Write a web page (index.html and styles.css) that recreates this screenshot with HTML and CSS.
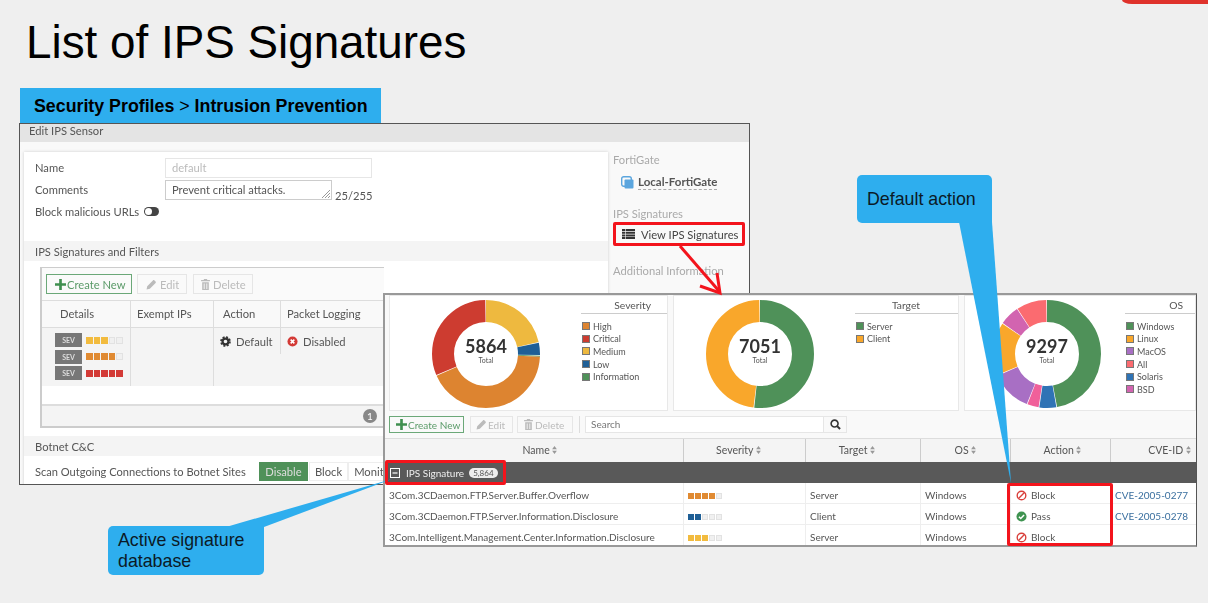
FILE: index.html
```html
<!DOCTYPE html>
<html lang="en">
<head>
  <meta charset="UTF-8">
  <title>List of IPS Signatures</title>
  <link rel="stylesheet" href="styles.css">
</head>
<body>

<!-- shared icons -->
<svg class="defs" width="0" height="0">
  <defs>
    <symbol id="i-plus" viewBox="0 0 10 10"><path d="M3.8 0h2.4v3.8H10v2.4H6.2V10H3.8V6.2H0V3.8h3.8z" fill="#3f8f4f"/></symbol>
    <symbol id="i-pencil" viewBox="0 0 10 10"><path d="M0.5 9.5l0.6-3 5.2-5.2c.4-.4 1-.4 1.4 0l1 1c.4.4.4 1 0 1.4L3.5 8.9z" fill="#bbb"/></symbol>
    <symbol id="i-trash" viewBox="0 0 10 10"><path d="M3.5 1V0h3v1H9v1H1V1zM2 3h6v7H2zM3.4 4v5h.8V4zm2.4 0v5h.8V4z" fill="#bbb" fill-rule="evenodd"/></symbol>
    <symbol id="i-search" viewBox="0 0 12 12"><circle cx="5" cy="5" r="3.8" fill="none" stroke="#333" stroke-width="1.7"/><path d="M7.8 7.8L11 11" stroke="#333" stroke-width="2.2"/></symbol>
    <symbol id="i-ban" viewBox="0 0 12 12"><circle cx="6" cy="6" r="4.7" fill="none" stroke="#d9413c" stroke-width="1.5"/><path d="M2.8 9.2l6.4-6.4" stroke="#d9413c" stroke-width="1.5"/></symbol>
    <symbol id="i-pass" viewBox="0 0 12 12"><circle cx="6" cy="6" r="5.5" fill="#3f9350"/><path d="M3.2 6.2l2 2 3.6-3.8" fill="none" stroke="#fff" stroke-width="1.6"/></symbol>
    <symbol id="i-off" viewBox="0 0 12 12"><circle cx="6" cy="6" r="5.5" fill="#d33a36"/><path d="M4 4l4 4M8 4l-4 4" stroke="#fff" stroke-width="1.7"/></symbol>
    <symbol id="i-gear" viewBox="0 0 12 12"><circle cx="6" cy="6" r="3.2" fill="none" stroke="#333" stroke-width="2.4"/><circle cx="6" cy="6" r="4.9" fill="none" stroke="#333" stroke-width="1.8" stroke-dasharray="2.2 1.65"/></symbol>
    <symbol id="i-list" viewBox="0 0 13 10"><path d="M0 0h13v2H0zM0 2.7h13v2H0zM0 5.4h13v2H0zM0 8.1h13v1.9H0z" fill="#333"/><path d="M3 0h.6v10H3z" fill="#fff"/></symbol>
    <symbol id="i-sort" viewBox="0 0 6 10"><path d="M3 0l3 4H0zM3 10L0 6h6z" fill="#999"/></symbol>
    <symbol id="i-group" viewBox="0 0 10 10"><rect x="0.5" y="0.5" width="9" height="9" fill="none" stroke="#fff"/><path d="M2.5 4.4h5v1.2h-5z" fill="#fff"/></symbol>
    <symbol id="i-fgt" viewBox="0 0 13 13"><rect x="0.7" y="0.7" width="9.6" height="9.6" rx="2" fill="none" stroke="#5aa5de" stroke-width="1.4"/><rect x="3.5" y="3.5" width="9" height="9" rx="1" fill="#5aa5de"/></symbol>
  </defs>
</svg>

<div class="corner"></div>
<h1 class="title">List of IPS Signatures</h1>
<div class="crumb"><b>Security Profiles</b> &gt; <b>Intrusion Prevention</b></div>

<!-- window 1: edit sensor -->
<div class="win win-edit">
  <div class="win-head">Edit IPS Sensor</div>
  <div class="edit-body">
    <div class="edit-main">
      <div class="field"><label>Name</label><div class="input input-name">default</div></div>
      <div class="field"><label>Comments</label>
        <div class="input input-comment">Prevent critical attacks.
          <svg class="grip" width="10" height="10" viewBox="0 0 10 10"><path d="M9 1L1 9M9 4L4 9M9 7L7 9" stroke="#999"/></svg>
        </div>
        <span class="counter">25/255</span>
      </div>
      <div class="field field-url"><label class="url-label">Block malicious URLs</label><span class="toggle"></span></div>

      <div class="band band-first">IPS Signatures and Filters</div>
      <div class="filters">
        <div class="tools">
          <span class="btn btn-new"><svg class="ic"><use href="#i-plus"/></svg>Create New</span>
          <span class="btn btn-off btn-edit"><svg class="ic"><use href="#i-pencil"/></svg> Edit</span>
          <span class="btn btn-off btn-del"><svg class="ic"><use href="#i-trash"/></svg>Delete</span>
        </div>
        <div class="ftable ftable-head">
          <div class="c-details">Details</div><div>Exempt IPs</div><div class="c-action">Action</div><div>Packet Logging</div>
        </div>
        <div class="ftable ftable-row">
          <div class="sevs">
            <div class="sev"><span class="sev-tag">SEV</span><span class="bar bar-big medium"><i class="on"></i><i class="on"></i><i class="on"></i><i></i><i></i></span></div>
            <div class="sev"><span class="sev-tag">SEV</span><span class="bar bar-big high"><i class="on"></i><i class="on"></i><i class="on"></i><i class="on"></i><i></i></span></div>
            <div class="sev"><span class="sev-tag">SEV</span><span class="bar bar-big critical"><i class="on"></i><i class="on"></i><i class="on"></i><i class="on"></i><i class="on"></i></span></div>
          </div>
          <div></div>
          <div class="cell-ic"><svg class="ic"><use href="#i-gear"/></svg>Default</div>
          <div class="cell-ic"><svg class="ic"><use href="#i-off"/></svg>Disabled</div>
        </div>
        <div class="filler"></div>
        <div class="ffoot"><span class="count">1</span></div>
      </div>

      <div class="band band-botnet">Botnet C&amp;C</div>
      <div class="scan">
        <span class="scan-label">Scan Outgoing Connections to Botnet Sites</span>
        <span class="seg seg-on">Disable</span><span class="seg">Block</span><span class="seg">Monitor</span>
      </div>
    </div>

    <div class="edit-side">
      <div class="side-title">FortiGate</div>
      <div class="side-device"><svg class="ic-fgt"><use href="#i-fgt"/></svg><span>Local-FortiGate</span></div>
      <div class="side-title side-sigs">IPS Signatures</div>
      <div class="side-link"><svg class="ic-list"><use href="#i-list"/></svg>View IPS Signatures</div>
      <div class="side-title side-info">Additional Information</div>
    </div>
  </div>
</div>

<!-- window 2: signature list -->
<div class="win win-list">
  <div class="charts">
    <div class="chart chart-sev">
      <div class="donut">
        <svg width="116" height="116" viewBox="0 0 116 116">
          <g class="rings" transform="rotate(-90 58 58)">
            <circle r="43" cx="58" cy="58" pathLength="360" stroke="#eeb93f" stroke-dasharray="77.2 360" stroke-dashoffset="0"/>
            <circle r="43" cx="58" cy="58" pathLength="360" stroke="#1f5f96" stroke-dasharray="13.2 360" stroke-dashoffset="-78"/>
            <circle r="43" cx="58" cy="58" pathLength="360" stroke="#4f9159" stroke-dasharray="1 360" stroke-dashoffset="-92"/>
            <circle r="43" cx="58" cy="58" pathLength="360" stroke="#dd8430" stroke-dasharray="153.2 360" stroke-dashoffset="-93"/>
            <circle r="43" cx="58" cy="58" pathLength="360" stroke="#cd3c30" stroke-dasharray="112.2 360" stroke-dashoffset="-247"/>
          </g>
        </svg>
        <div class="total"><b>5864</b><small>Total</small></div>
      </div>
      <div class="legend">
        <div class="legend-title">Severity</div>
        <div class="key"><i class="k-high"></i>High</div>
        <div class="key"><i class="k-crit"></i>Critical</div>
        <div class="key"><i class="k-med"></i>Medium</div>
        <div class="key"><i class="k-low"></i>Low</div>
        <div class="key"><i class="k-info"></i>Information</div>
      </div>
    </div>
    <div class="chart chart-target">
      <div class="donut">
        <svg width="116" height="116" viewBox="0 0 116 116">
          <g class="rings" transform="rotate(-90 58 58)">
            <circle r="43" cx="58" cy="58" pathLength="360" stroke="#4f9159" stroke-dasharray="186.2 360" stroke-dashoffset="0"/>
            <circle r="43" cx="58" cy="58" pathLength="360" stroke="#f9a72b" stroke-dasharray="172.2 360" stroke-dashoffset="-187"/>
          </g>
        </svg>
        <div class="total"><b>7051</b><small>Total</small></div>
      </div>
      <div class="legend">
        <div class="legend-title">Target</div>
        <div class="key"><i class="k-info"></i>Server</div>
        <div class="key"><i class="k-client"></i>Client</div>
      </div>
    </div>
    <div class="chart chart-os">
      <div class="donut">
        <svg width="116" height="116" viewBox="0 0 116 116">
          <g class="rings" transform="rotate(-90 58 58)">
            <circle r="43" cx="58" cy="58" pathLength="360" stroke="#4f9159" stroke-dasharray="169.2 360" stroke-dashoffset="0"/>
            <circle r="43" cx="58" cy="58" pathLength="360" stroke="#2f73b5" stroke-dasharray="18.2 360" stroke-dashoffset="-170"/>
            <circle r="43" cx="58" cy="58" pathLength="360" stroke="#f0609a" stroke-dasharray="12.2 360" stroke-dashoffset="-189"/>
            <circle r="43" cx="58" cy="58" pathLength="360" stroke="#a86fc4" stroke-dasharray="44.2 360" stroke-dashoffset="-202"/>
            <circle r="43" cx="58" cy="58" pathLength="360" stroke="#f9a72b" stroke-dasharray="57.2 360" stroke-dashoffset="-247"/>
            <circle r="43" cx="58" cy="58" pathLength="360" stroke="#d264b0" stroke-dasharray="21.2 360" stroke-dashoffset="-305"/>
            <circle r="43" cx="58" cy="58" pathLength="360" stroke="#fb6b70" stroke-dasharray="32.2 360" stroke-dashoffset="-327"/>
          </g>
        </svg>
        <div class="total"><b>9297</b><small>Total</small></div>
      </div>
      <div class="legend">
        <div class="legend-title">OS</div>
        <div class="key"><i class="k-info"></i>Windows</div>
        <div class="key"><i class="k-client"></i>Linux</div>
        <div class="key"><i class="k-mac"></i>MacOS</div>
        <div class="key"><i class="k-all"></i>All</div>
        <div class="key"><i class="k-sol"></i>Solaris</div>
        <div class="key"><i class="k-bsd"></i>BSD</div>
      </div>
    </div>
  </div>

  <div class="list-tools">
    <span class="btn btn-new btn-new-list"><svg class="ic"><use href="#i-plus"/></svg>Create New</span>
    <span class="btn btn-off btn-edit-list"><svg class="ic"><use href="#i-pencil"/></svg> Edit</span>
    <span class="btn btn-off btn-del-list"><svg class="ic"><use href="#i-trash"/></svg> Delete</span>
    <span class="tool-sep"></span>
    <div class="search"><span class="search-text">Search</span><span class="search-btn"><svg class="ic-search"><use href="#i-search"/></svg></span></div>
  </div>

  <div class="sig sig-head">
    <div class="h-name">Name <svg class="ic-sort"><use href="#i-sort"/></svg></div>
    <div class="h-sev">Severity <svg class="ic-sort"><use href="#i-sort"/></svg></div>
    <div class="h-target">Target <svg class="ic-sort"><use href="#i-sort"/></svg></div>
    <div>OS <svg class="ic-sort"><use href="#i-sort"/></svg></div>
    <div class="h-action">Action <svg class="ic-sort"><use href="#i-sort"/></svg></div>
    <div class="h-cve">CVE-ID <svg class="ic-sort"><use href="#i-sort"/></svg></div>
  </div>
  <div class="sig-group"><svg class="ic-group"><use href="#i-group"/></svg>IPS Signature <span class="pill">5,864</span></div>
  <div class="sig sig-row">
    <div>3Com.3CDaemon.FTP.Server.Buffer.Overflow</div>
    <div><span class="bar high"><i class="on"></i><i class="on"></i><i class="on"></i><i class="on"></i><i></i></span></div>
    <div>Server</div><div>Windows</div>
    <div class="cell-action"><svg class="ic"><use href="#i-ban"/></svg>Block</div>
    <div class="cve">CVE-2005-0277</div>
  </div>
  <div class="sig sig-row">
    <div>3Com.3CDaemon.FTP.Server.Information.Disclosure</div>
    <div><span class="bar low"><i class="on"></i><i class="on"></i><i></i><i></i><i></i></span></div>
    <div>Client</div><div>Windows</div>
    <div class="cell-action"><svg class="ic"><use href="#i-pass"/></svg>Pass</div>
    <div class="cve">CVE-2005-0278</div>
  </div>
  <div class="sig sig-row">
    <div>3Com.Intelligent.Management.Center.Information.Disclosure</div>
    <div><span class="bar medium"><i class="on"></i><i class="on"></i><i class="on"></i><i></i><i></i></span></div>
    <div>Server</div><div>Windows</div>
    <div class="cell-action"><svg class="ic"><use href="#i-ban"/></svg>Block</div>
    <div></div>
  </div>
</div>

<!-- annotations on top of the windows -->
<svg class="notes" width="1208" height="603" viewBox="0 0 1208 603">
  <polygon points="959,222 992,222 1011,483" fill="#2eaeee"/>
  <polygon points="226,527 264,527 392,479" fill="#2eaeee"/>
  <path d="M680 246L719 291" stroke="#f3141c" stroke-width="3" fill="none"/>
  <path d="M700 286L720 293L717 273" stroke="#f3141c" stroke-width="3" fill="none"/>
</svg>
<div class="mark mark-view"></div>
<div class="mark mark-group"></div>
<div class="mark mark-action"></div>
<div class="callout callout-action">Default action</div>
<div class="callout callout-db">Active signature<br>database</div>

</body>
</html>
```

FILE: styles.css
```css
* {
  box-sizing: border-box;
}
html, body {
  margin: 0;
  height: 603px;
  overflow: hidden;
}
body {
  position: relative;
  background-color: #efefef;
  font-family: Lato, "Open Sans", sans-serif;
  font-size: 11.2px;
  color: #555;
}
.defs {
  position: absolute;
}
.corner {
  position: absolute;
  top: 0;
  right: 0;
  width: 86px;
  height: 4px;
  background-color: #df322b;
  border-bottom-left-radius: 10px 4px;
}
.title {
  position: absolute;
  left: 26px;
  top: 16px;
  margin: 0;
  font: normal 45.8px/54px "Liberation Sans", Arial, sans-serif;
  color: #000;
}
.crumb {
  position: absolute;
  left: 20px;
  top: 88px;
  width: 361px;
  height: 35px;
  padding: 8px 0 0 14px;
  background-color: #2eaeee;
  font: 17.8px/20px "Liberation Sans", Arial, sans-serif;
  color: #000;
}

/* windows */
.win {
  position: absolute;
  background-color: #f9f9f9;
  filter: blur(0.3px);
}
.win-edit {
  left: 19px;
  top: 123px;
  width: 731px;
  height: 362px;
  border: 1px solid #555;
  overflow: hidden;
}
.win-head {
  height: 18px;
  padding: 0 9px;
  background-color: #e4e4e4;
  line-height: 14px;
}
.edit-body {
  display: flex;
  padding: 10px 0 0 4px;
}
.edit-main {
  width: 584px;
  height: 340px;
  padding-top: 6px;
  background-color: #fff;
  box-shadow: 0 0 3px #ccc;
}
.field {
  display: flex;
  align-items: center;
  height: 20px;
  margin-bottom: 2px;
  padding-left: 11px;
}
.field label {
  width: 130px;
  margin-top: -2px;
}
.field .url-label {
  width: auto;
}
.input {
  position: relative;
  height: 20px;
  padding: 0 6px;
  border: 1px solid #e6e6e6;
  line-height: 18px;
  color: #bbb;
}
.input-name {
  width: 207px;
}
.input-comment {
  width: 167px;
  border-color: #ccc;
  color: #555;
}
.grip {
  position: absolute;
  right: 0;
  bottom: 0;
}
.counter {
  margin: 10px 0 0 3px;
}
.toggle {
  position: relative;
  width: 15px;
  height: 9px;
  margin: -2px 0 0 5px;
  background-color: #444;
  border-radius: 5px;
}
.toggle::before {
  content: "";
  position: absolute;
  left: 1px;
  top: 1px;
  width: 7px;
  height: 7px;
  background-color: #fff;
  border-radius: 50%;
}
.band {
  height: 20px;
  padding-left: 11px;
  background-color: #f4f4f4;
  line-height: 21px;
}
.band-first {
  margin-top: 19px;
}
.filters {
  width: 344px;
  height: 161px;
  margin: 6px 0 8px 16px;
  border: 1px solid #ccc;
  border-width: 1px 0 2px 2px;
  background-color: #fafafa;
}
.tools {
  display: flex;
  gap: 5px;
  height: 32px;
  padding: 6px 0 0 4px;
}
.btn {
  display: inline-flex;
  align-items: center;
  height: 20px;
  padding: 0 5px;
  border: 1px solid #e6e6e6;
  color: #bbb;
  white-space: nowrap;
}
.btn-new {
  width: 86px;
  padding-left: 8px;
  border-color: #6ba878;
  color: #5a9a68;
}
.btn-edit {
  width: 50px;
  padding-left: 8px;
  gap: 2px;
}
.btn-del {
  width: 60px;
  margin-left: 1px;
  padding-left: 6px;
  gap: 1px;
}
.ic {
  flex: none;
  width: 11px;
  height: 11px;
  margin-right: 1px;
}
.ftable {
  display: grid;
  grid-template-columns: 89px 83px 67px 1fr;
}
.ftable > div {
  padding-left: 6px;
  border-right: 1px solid #ddd;
}
.ftable-head {
  height: 28px;
  border-top: 1px solid #ddd;
  border-bottom: 1px solid #ddd;
  background-color: #f9f9f9;
  line-height: 26px;
}
.ftable-head .c-details {
  padding-left: 18px;
}
.ftable-head .c-action {
  padding-left: 9px;
}
.ftable-row {
  height: 58px;
  background-color: #f4f4f4;
}
.ftable > .sevs {
  padding: 5px 0 0 13px;
}
.sev {
  display: flex;
  align-items: center;
  gap: 4px;
  height: 14px;
  margin-bottom: 2.6px;
}
.sev-tag {
  width: 27px;
  height: 14px;
  background-color: #777;
  color: #ddd;
  font-size: 7px;
  font-weight: 700;
  line-height: 14px;
  text-align: center;
}
.cell-ic {
  display: flex;
  align-items: center;
  gap: 4px;
  height: 26px;
}
.filler {
  height: 18px;
  background-color: #fff;
}
.ffoot {
  display: flex;
  justify-content: flex-end;
  align-items: center;
  height: 22px;
  padding-right: 7px;
  border-top: 2px solid #ddd;
  background-color: #f4f4f4;
}
.count {
  width: 14px;
  height: 14px;
  background-color: #888;
  border-radius: 50%;
  color: #fff;
  font-size: 10px;
  line-height: 14px;
  text-align: center;
}
.scan {
  display: flex;
  align-items: center;
  height: 19px;
  margin-top: 6px;
  padding-left: 11px;
}
.scan-label {
  width: 224px;
  font-size: 11.1px;
}
.seg {
  height: 19px;
  padding: 0 5px;
  border: 1px solid #eee;
  line-height: 18px;
}
.seg-on {
  width: 49px;
  margin-right: 1px;
  padding: 0;
  background-color: #4f9159;
  border-color: #4f9159;
  color: #ddd;
  text-align: center;
}
.edit-side {
  padding: 1px 0 0 5px;
}
.side-title {
  color: #aaa;
  line-height: 14px;
}
.side-device {
  display: flex;
  align-items: center;
  gap: 4px;
  margin: 8px 0 0 8px;
  font-size: 11.5px;
  font-weight: 700;
  line-height: 14px;
}
.side-device span {
  border-bottom: 1px dashed #aaa;
}
.ic-fgt {
  width: 13px;
  height: 13px;
}
.side-sigs {
  margin-top: 17px;
}
.side-link {
  display: flex;
  align-items: center;
  gap: 6px;
  height: 20px;
  margin: 3px 0 0 9px;
  color: #444;
}
.ic-list {
  width: 13px;
  height: 10px;
}
.side-info {
  margin-top: 20px;
}

/* signature list */
.win-list {
  left: 383px;
  top: 293px;
  width: 814px;
  height: 254px;
  border: 2px solid #999;
  border-right: 1px solid #555;
  overflow: hidden;
}
.charts {
  display: flex;
  gap: 5px;
  padding: 0 0 0 4px;
}
.chart {
  position: relative;
  height: 116px;
  border: 1px solid #e8e8e8;
  background-color: #fff;
}
.chart-sev {
  flex: none;
  width: 279px;
}
.chart-target {
  flex: none;
  width: 286px;
}
.chart-os {
  flex: 1;
}
.donut {
  position: absolute;
  top: 0;
  width: 116px;
  height: 116px;
}
.chart-sev .donut {
  left: 38px;
}
.chart-target .donut {
  left: 28px;
}
.chart-os .donut {
  left: 24px;
}
.rings circle {
  fill: none;
  stroke-width: 22;
}
.total {
  position: absolute;
  left: 0;
  right: 0;
  top: 41px;
  text-align: center;
}
.total b {
  display: block;
  font-size: 18px;
  font-weight: 700;
  line-height: 19px;
  color: #333;
}
.total small {
  display: block;
  font-size: 7px;
  line-height: 8px;
}
.legend {
  position: absolute;
  right: 0;
  top: 2px;
}
.chart-sev .legend {
  width: 86px;
}
.chart-target .legend {
  width: 103px;
}
.chart-os .legend {
  width: 70px;
}
.legend-title {
  height: 16px;
  margin-bottom: 6px;
  padding-right: 16px;
  border-bottom: 1px solid #ccc;
  font-size: 10.3px;
  line-height: 15px;
  text-align: right;
}
.chart-target .legend-title {
  padding-right: 38px;
}
.chart-os .legend-title {
  padding-right: 12px;
}
.key {
  display: flex;
  align-items: center;
  gap: 3px;
  height: 12.6px;
  padding-left: 1px;
  font-size: 9px;
}
.key i {
  width: 8px;
  height: 8px;
  border: 1px solid #777;
}
.k-high { background-color: #dd8430; }
.k-crit { background-color: #cd3c30; }
.k-med { background-color: #eeb93f; }
.k-low { background-color: #1f5f96; }
.k-info { background-color: #4f9159; }
.k-client { background-color: #f9a72b; }
.k-mac { background-color: #a86fc4; }
.k-all { background-color: #fb6b70; }
.k-sol { background-color: #2f73b5; }
.k-bsd { background-color: #d264b0; }

.list-tools {
  display: flex;
  align-items: center;
  height: 17px;
  margin-top: 5px;
  padding-left: 4px;
  font-size: 10px;
}
.list-tools .btn {
  height: 17px;
}
.btn-new-list {
  width: 75px;
  padding-left: 6px;
}
.btn-edit-list {
  width: 43px;
  margin-left: 6px;
}
.btn-del-list {
  width: 56px;
  margin-left: 4px;
}
.tool-sep {
  width: 1px;
  height: 17px;
  margin: 0 5px 0 6px;
  background-color: #ddd;
}
.search {
  display: flex;
  width: 262px;
  height: 17px;
  border: 1px solid #e6e6e6;
  background-color: #fff;
}
.search-text {
  flex: 1;
  padding-left: 5px;
  line-height: 15px;
  color: #777;
}
.search-btn {
  display: flex;
  justify-content: center;
  align-items: center;
  width: 23px;
  border-left: 1px solid #e6e6e6;
  background-color: #f9f9f9;
}
.ic-search {
  width: 11px;
  height: 11px;
}
.sig {
  display: grid;
  grid-template-columns: 299px 122px 115px 90px 100px 1fr;
}
.sig-head {
  height: 24px;
  margin-top: 5px;
  border-top: 1px solid #ddd;
  background-color: #f4f4f4;
  font-size: 10.5px;
  line-height: 23px;
  text-align: center;
}
.sig-head > div {
  border-right: 1px solid #ccc;
}
.sig-head .h-name {
  padding-left: 12px;
}
.sig-head .h-sev {
  padding-right: 12px;
}
.sig-head .h-target {
  padding-right: 12px;
}
.sig-head .h-action {
  padding-left: 4px;
}
.sig-head .h-cve {
  padding-left: 32px;
  border-right: 0;
  white-space: nowrap;
}
.ic-sort {
  width: 5px;
  height: 8px;
}
.sig-group {
  display: flex;
  align-items: center;
  height: 21px;
  padding-left: 5px;
  background-color: #595959;
  color: #eee;
  font-size: 10px;
}
.ic-group {
  width: 10px;
  height: 10px;
  margin-right: 6px;
}
.pill {
  margin-left: 5px;
  padding: 0 4px;
  background-color: #eee;
  border-radius: 7px;
  color: #555;
  font-size: 8px;
  line-height: 10px;
}
.sig-row {
  height: 21px;
  border-bottom: 1px solid #eee;
  background-color: #fff;
  font-size: 10px;
  line-height: 24px;
}
.sig-row:last-child {
  border-bottom: 0;
}
.sig-row > div {
  height: 21px;
  padding-left: 4px;
  border-right: 1px solid #eee;
  white-space: nowrap;
  overflow: hidden;
}
.sig-row > div:last-child {
  border-right: 0;
}
.sig-row > .cell-action {
  display: flex;
  align-items: center;
  padding: 3px 0 0 5px;
}
.cell-action .ic {
  width: 11px;
  height: 11px;
  margin-right: 4px;
}
.cve {
  color: #3a6f9f;
}
.bar {
  display: inline-flex;
  gap: 1px;
  vertical-align: middle;
}
.bar i {
  width: 6px;
  height: 6px;
  background-color: #f0f0f0;
  border: 1px solid #e2e2e2;
}
.bar-big i {
  width: 6.6px;
  height: 7px;
}
.medium i.on { background-color: #f2bb3e; border-color: #f2bb3e; }
.high i.on { background-color: #e08a32; border-color: #e08a32; }
.critical i.on { background-color: #d33a36; border-color: #d33a36; }
.low i.on { background-color: #1f5f96; border-color: #1f5f96; }

/* annotations */
.notes {
  position: absolute;
  left: 0;
  top: 0;
}
.mark {
  position: absolute;
  border: 3px solid #f3141c;
  border-radius: 2px;
}
.mark-view {
  left: 613px;
  top: 222px;
  width: 132px;
  height: 24px;
}
.mark-group {
  left: 385px;
  top: 460px;
  width: 121px;
  height: 25px;
}
.mark-action {
  left: 1007px;
  top: 483px;
  width: 106px;
  height: 63px;
}
.callout {
  position: absolute;
  background-color: #2eaeee;
  border-radius: 5px;
  font-family: "Liberation Sans", Arial, sans-serif;
  font-size: 17.8px;
  color: #0b1a26;
}
.callout-action {
  left: 857px;
  top: 175px;
  width: 135px;
  height: 48px;
  padding: 14px 0 0 10px;
  border-bottom-right-radius: 0;
  line-height: 20px;
}
.callout-db {
  left: 108px;
  top: 526px;
  width: 156px;
  height: 49px;
  padding: 4px 0 0 10px;
  border-top-right-radius: 0;
  line-height: 21px;
}
```
